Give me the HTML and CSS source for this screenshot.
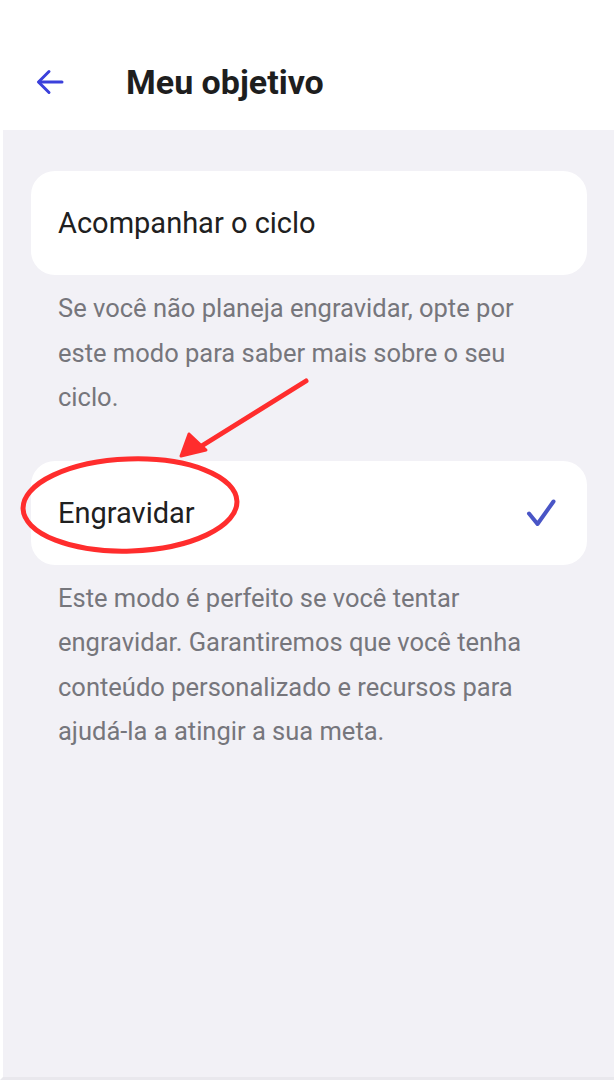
FILE: index.html
```html
<!DOCTYPE html>
<html lang="pt-BR">
<head>
    <meta charset="UTF-8">
    <meta name="viewport" content="width=device-width, initial-scale=1.0">
    <title>Meu objetivo</title>
    <link rel="stylesheet" href="styles.css">
</head>
<body>
    <div class="page">
        <header class="topbar">
            <button class="back" aria-label="Voltar">
                <svg width="28" height="26" viewBox="0 0 28 26" fill="none" stroke="#3b40db" stroke-width="3" stroke-linecap="round" stroke-linejoin="round">
                    <path d="M26 13H3"/>
                    <path d="M13 2.5L2.5 13L13 23.5"/>
                </svg>
            </button>
            <h1>Meu objetivo</h1>
        </header>

        <main class="content">
            <div class="option">
                <span>Acompanhar o ciclo</span>
            </div>
            <p class="desc">Se você não planeja engravidar, opte por este modo para saber mais sobre o seu ciclo.</p>

            <div class="option selected">
                <span>Engravidar</span>
                <svg class="check" width="32" height="32" viewBox="0 0 32 32" fill="none" stroke="#4955c6" stroke-width="4" stroke-linecap="round" stroke-linejoin="round">
                    <path d="M4 16.5L12.5 27L28.5 4.5"/>
                </svg>
            </div>
            <p class="desc">Este modo é perfeito se você tentar engravidar. Garantiremos que você tenha conteúdo personalizado e recursos para ajudá-la a atingir a sua meta.</p>
        </main>

        <svg class="marks" width="614" height="1080" viewBox="0 0 614 1080" fill="none">
            <path d="M306 381L200 447" stroke="#ff2d2d" stroke-width="5" stroke-linecap="round"/>
            <path d="M181 456L189 434L206 450Z" fill="#ff2d2d" stroke="#ff2d2d" stroke-width="3" stroke-linejoin="round"/>
            <ellipse cx="130" cy="505" rx="107" ry="46" stroke="#ff2d2d" stroke-width="5" transform="rotate(-2 130 505)"/>
        </svg>
    </div>
</body>
</html>
```

FILE: styles.css
```css
body {
    margin: 0;
    font-family: Roboto, "Noto Sans", Arial, sans-serif;
    background: #fff;
}
.page {
    position: relative;
    min-height: 100vh;
    display: flex;
    flex-direction: column;
}
.topbar {
    height: 130px;
    box-sizing: border-box;
    padding: 34px 0 0 36px;
    display: flex;
    align-items: center;
    background: #fff;
}
.back {
    border: none;
    background: none;
    padding: 0;
    display: flex;
    width: 28px;
    margin-right: 62px;
}
.topbar h1 {
    margin: 0;
    font-size: 34px;
    font-weight: 700;
    color: #1e1e1e;
}
.content {
    flex: 1;
    background: #f2f1f6;
    border-left: 3px solid #fff;
    border-bottom: 3px solid #e9e8ed;
    padding: 41px 27px 0 28px;
}
.option {
    height: 104px;
    box-sizing: border-box;
    background: #fff;
    border-radius: 24px;
    padding: 0 30px 0 27px;
    display: flex;
    align-items: center;
    justify-content: space-between;
    font-size: 29px;
    color: #202020;
}
.desc {
    margin: 11px 0 41px;
    padding: 0 27px;
    font-size: 25.5px;
    line-height: 44.5px;
    color: #76767c;
}
.marks {
    position: absolute;
    top: 0;
    left: 0;
    pointer-events: none;
}
```
